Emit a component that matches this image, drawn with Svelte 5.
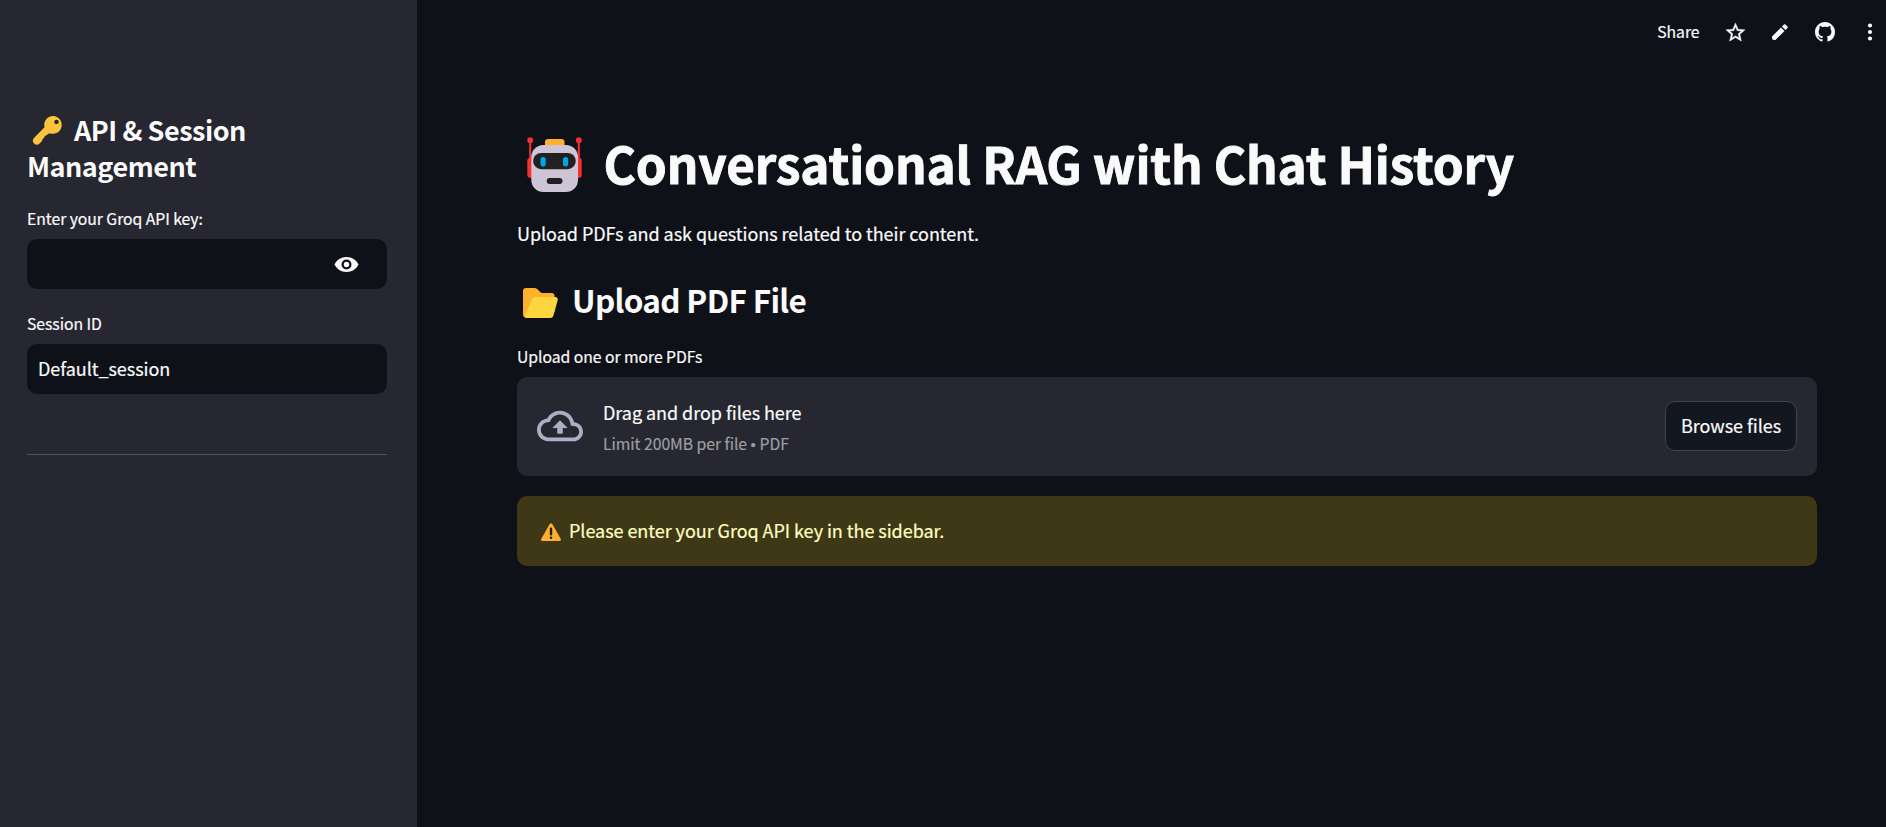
<script>
  const title = 'Conversational RAG with Chat History';
  let apiKey = $state('');
  let session = $state('Default_session');
</script>

<div class="app">
  <aside class="sidebar">
    <h2 class="side-title">
      <span class="line"><svg class="key" viewBox="0 0 32 32"><path fill="#fcc43c" fill-rule="evenodd" d="M21.8 1a9.2 9.2 0 0 0-8.9 11.6L2 23.7a4 4 0 0 0 .2 5.8 4 4 0 0 0 5.6-.1l2.5-2.6c.5-1.5.5-2.2 1.5-2.8 1-.6 1.2-1.6 1.5-2.5 1-.2 2.1-.5 2.8-1.600l2.100-1.100A9.200 9.200 0 1 0 21.800 1zM25.300 4.800a2.300 2.300 0 1 1 0 4.600 2.300 2.300 0 0 1 0-4.600z" /></svg>API &amp; Session</span>
      <span class="line">Management</span>
    </h2>
    <label class="label" for="key">Enter your Groq API key:</label>
    <div class="field">
      <input id="key" type="password" bind:value={apiKey} />
      <svg class="eye" viewBox="0 0 24 15"><path fill="#fafafa" fill-rule="evenodd" d="M12 0C6.500 0 2 3 0 7.500 2 12 6.500 15 12 15s10-3 12-7.500C22 3 17.500 0 12 0zm0 12.500a5 5 0 1 1 0-10 5 5 0 0 1 0 10z" /><circle cx="12" cy="7.500" r="2.700" fill="#fafafa" /></svg>
    </div>
    <label class="label second" for="session">Session ID</label>
    <div class="field"><input id="session" class="sess" type="text" bind:value={session} /></div>
    <hr />
  </aside>

  <main>
    <header>
      <span class="share">Share</span>
      <svg class="star" viewBox="0 0 24 24"><path fill="#fafafa" stroke="#fafafa" stroke-width="0.4" stroke-linejoin="round" d="M22 9.240l-7.190-.620L12 2 9.190 8.630 2 9.240l5.460 4.730L5.820 21 12 17.270 18.180 21l-1.630-7.030L22 9.240zM12 15.400l-3.760 2.270 1-4.280-3.320-2.880 4.380-.380L12 6.100l1.710 4.040 4.380.380-3.320 2.880 1 4.280L12 15.400z" /></svg>
      <svg class="pencil" viewBox="0 0 16 16"><path fill="#fafafa" d="M0 12.600V14a2 2 0 0 0 2 2h1.400L12.500 7 9 3.500zM10 2.500L13.500 6l2-2a1.100 1.100 0 0 0 0-1.500L13.500.500a1.100 1.100 0 0 0-1.500 0z" /></svg>
      <svg class="github" viewBox="0 0 16 16"><path fill="#fafafa" d="M8 0C3.580 0 0 3.580 0 8c0 3.540 2.290 6.530 5.470 7.590.4.070.55-.170.55-.380 0-.190-.010-.820-.010-1.490-2.010.370-2.530-.490-2.690-.940-.090-.230-.480-.940-.820-1.130-.280-.150-.680-.520-.010-.530.630-.010 1.080.580 1.230.820.720 1.210 1.870.870 2.330.660.070-.520.280-.870.510-1.070-1.780-.200-3.640-.890-3.640-3.950 0-.870.310-1.590.820-2.150-.080-.200-.360-1.020.080-2.120 0 0 .670-.210 2.200.820.640-.180 1.320-.270 2-.270s1.360.090 2 .270c1.530-1.040 2.200-.820 2.200-.820.440 1.100.160 1.920.080 2.120.510.560.820 1.270.820 2.150 0 3.070-1.870 3.750-3.650 3.950.290.250.540.730.540 1.480 0 1.070-.010 1.930-.010 2.200 0 .210.150.460.550.380A8.010 8.010 0 0 0 16 8c0-4.420-3.580-8-8-8z" /></svg>
      <svg class="dots" viewBox="0 0 6 18"><g fill="#fafafa"><circle cx="3" cy="2.500" r="2.100" /><circle cx="3" cy="9" r="2.100" /><circle cx="3" cy="15.500" r="2.100" /></g></svg>
    </header>

    <h1>
      <svg class="robot" viewBox="0 0 55 55">
        <g fill="#f92f2f"><circle cx="3.200" cy="3.200" r="2.900" /><circle cx="51.800" cy="3.200" r="2.900" /><rect x="2.200" y="3" width="2" height="24" /><rect x="50.800" y="3" width="2" height="24" /><rect x="0.300" y="20.500" width="10" height="20.500" rx="3.500" /><rect x="44.700" y="20.500" width="10" height="20.500" rx="3.500" /></g>
        <rect x="18" y="2" width="19.500" height="10" rx="3" fill="#ffb02e" />
        <rect x="4.300" y="8" width="46.700" height="47" rx="12" fill="#cdc4d6" />
        <rect x="6.200" y="16" width="42.500" height="16.200" rx="8" fill="#212121" />
        <g fill="#00a6ed"><rect x="13.500" y="20" width="5.200" height="9.500" rx="2.500" /><rect x="36" y="20" width="5.200" height="9.500" rx="2.500" /></g>
        <rect x="19.700" y="41" width="15.800" height="6" rx="3" fill="#212121" />
      </svg><span class="title">{title}</span>
    </h1>
    <p class="intro">Upload PDFs and ask questions related to their content.</p>
    <h2 class="upload-title">
      <svg class="folder" viewBox="0 0 35 30"><path fill="#ffb02e" d="M0 3a3 3 0 0 1 3-3h8.500c1 0 2 .4 2.700 1.100l3 2.900c.6.600 1.200.900 2 .900H28.500a3 3 0 0 1 3 3V24L4 30a4 4 0 0 1-4-4z" /><path fill="#fcd53f" d="M12.500 9H32.300a2.500 2.500 0 0 1 2.400 3.200L30.300 28a3 3 0 0 1-2.800 2H4.300c-1.900 0-2.800-1.700-2.200-3.300L8.700 11.500A4 4 0 0 1 12.500 9z" /></svg><span>Upload PDF File</span>
    </h2>
    <span class="label files-label">Upload one or more PDFs</span>
    <section class="dropzone">
      <svg class="cloud" viewBox="0 0 24 24"><path fill="#a9afc4" d="M19.350 10.040C18.670 6.590 15.640 4 12 4 9.110 4 6.600 5.640 5.350 8.040 2.340 8.360 0 10.910 0 14c0 3.310 2.690 6 6 6h13c2.760 0 5-2.240 5-5 0-2.640-2.050-4.780-4.650-4.960zM19 18H6c-2.210 0-4-1.790-4-4 0-2.050 1.530-3.760 3.560-3.970l1.070-.110.500-.950C8.080 7.140 9.940 6 12 6c2.620 0 4.880 1.860 5.390 4.430l.3 1.500 1.530.110c1.560.100 2.780 1.410 2.780 2.960 0 1.650-1.350 3-3 3zM8 13h2.550v3h2.900v-3H16l-4-4z" /></svg>
      <div class="drop-text">
        <span class="drag">Drag and drop files here</span>
        <span class="limit">Limit 200MB per file <b>•</b> PDF</span>
      </div>
      <button>Browse files</button>
    </section>
    <div class="alert">
      <svg class="warn" viewBox="0 0 20 18"><path fill="#ffb02e" d="M8.700.9a1.500 1.500 0 0 1 2.600 0l8.500 15a1.400 1.400 0 0 1-1.200 2.100H1.400A1.400 1.400 0 0 1 .2 15.900z" /><rect x="8.800" y="4.500" width="2.400" height="8" rx="1.200" fill="#212121" /><circle cx="10" cy="14.800" r="1.300" fill="#212121" /></svg>
      <span>Please enter your Groq API key in the sidebar.</span>
    </div>
  </main>
</div>

<style>
  :global(body) { margin: 0; background: #0e1117; }
  .app {
    display: flex;
    width: 100%;
    height: 827px;
    overflow: hidden;
    background: #0e1117;
    color: #fafafa;
    font-family: "Noto Sans CJK SC", "Noto Sans", sans-serif;
    font-size: 18px;
    line-height: 32px;
    letter-spacing: -0.045px;
    -webkit-text-stroke: 0.2px currentColor;
  }
  .app * { box-sizing: border-box; }
  svg { display: block; flex: none; overflow: visible; }
  h1, h2, p { margin: 0; white-space: nowrap; }
  .sidebar { flex: none; width: 417px; padding: 112px 30px 0 27px; background: #262730; }
  .side-title { height: 93px; font-size: 27px; line-height: 36px; font-weight: 600; letter-spacing: -0.48px; -webkit-text-stroke-width: 0; }
  .line { display: flex; height: 36px; }
  .key { width: 31px; height: 31px; margin: 3px 11px 0 5px; }
  .label { display: block; height: 34px; font-size: 15.750px; line-height: 28px; white-space: nowrap; }
  .field {
    display: flex;
    align-items: center;
    height: 50px;
    padding-right: 28px;
    border-radius: 10px;
    background: #0e1117;
  }
  input {
    flex: 1;
    min-width: 0;
    height: 48px;
    padding: 0 0 2px 11px;
    border: 0;
    outline: 0;
    background: transparent;
    color: #fafafa;
    font: inherit;
    letter-spacing: inherit;
  }
  .eye { width: 25px; height: 15px; }
  .second { margin-top: 21px; }
  hr { height: 1px; margin: 60px 0 0; border: 0; background: #4f5058; }
  main { flex: 1; min-width: 0; padding: 0 69px 0 100px; }
  header { display: flex; align-items: center; justify-content: flex-end; height: 64px; margin-right: -56px; }
  .share { font-size: 15.750px; line-height: 28px; margin-right: 24px; }
  .star { width: 23px; height: 23px; margin-right: 25.500px; }
  .pencil { width: 16px; height: 16px; margin-right: 27px; }
  .github { width: 20px; height: 20px; margin-right: 31.500px; }
  .dots { width: 6px; height: 18px; margin-right: 0.500px; }
  h1 { display: flex; height: 66px; margin-top: 65px; font-size: 49.500px; line-height: 66px; font-weight: 700; letter-spacing: -0.14px; }
  .title { padding-top: 1px; -webkit-text-stroke: 0.9px #fafafa; }
  .robot { width: 55px; height: 55px; margin: 8px 21.500px 0 10px; }
  .intro { margin-top: 22px; }
  .upload-title { display: flex; height: 42px; margin-top: 29px; font-size: 31.500px; line-height: 42px; font-weight: 600; letter-spacing: -0.68px; -webkit-text-stroke-width: 0; }
  .folder { width: 35px; height: 30px; margin: 10px 14px 0 6px; }
  .files-label { margin-top: 23px; }
  .dropzone { display: flex; align-items: center; height: 99px; padding: 0 20px 1px; border-radius: 10px; background: #262730; }
  .cloud { width: 46px; height: 46px; margin-right: 20px; }
  .drop-text { display: flex; flex: 1; flex-direction: column; white-space: nowrap; }
  .drag { height: 34px; line-height: 35px; }
  .limit { height: 28px; font-size: 15.750px; line-height: 29px; color: #9c9da2; }
  .limit b { display: inline-block; width: 5px; margin-right: 0.500px; font: 15px/20px "Liberation Sans", sans-serif; }
  button {
    width: 132px;
    height: 50px;
    padding: 0 0 2px;
    border: 1px solid #41444c;
    border-radius: 10px;
    background: #131720;
    color: #fafafa;
    font: inherit;
    letter-spacing: inherit;
    white-space: nowrap;
  }
  .alert {
    display: flex;
    align-items: center;
    height: 70px;
    margin-top: 20px;
    padding: 0 24px 2px;
    border-radius: 10px;
    background: #3e3816;
    color: #ffffc2;
  }
  .warn { width: 20px; height: 18px; margin: 3px 8px 0 0; }
</style>
